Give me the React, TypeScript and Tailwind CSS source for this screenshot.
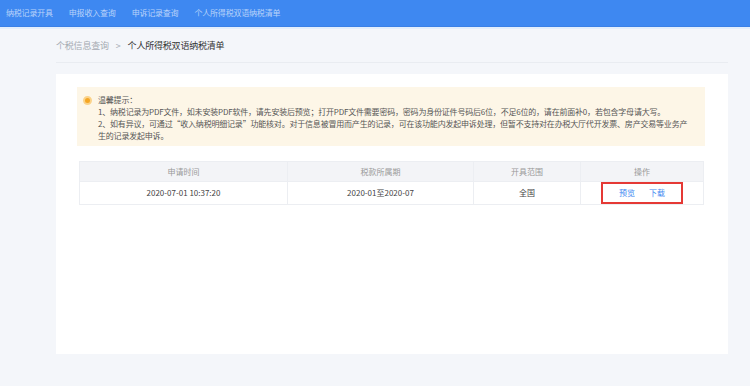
import React from 'react';

const navItems = ['纳税记录开具', '申报收入查询', '申诉记录查询', '个人所得税双语纳税清单'];

const font = { fontFamily: '"Noto Sans CJK SC", "Noto Sans", sans-serif' };

export default function App() {
  return (
    <div className="w-[750px] h-[386px] bg-[#f4f6fa] overflow-hidden text-[#333]" style={font}>
      {/* top nav */}
      <div className="h-[27px] bg-[#3e88f1] border-b border-[#3a80e6] flex items-center pl-[6px] gap-[16px]">
        {navItems.map((n) => (
          <span key={n} className="text-[8px] text-[#b9d3fa] leading-none tracking-[-0.2px]">
            {n}
          </span>
        ))}
      </div>
      <div className="h-[2px] bg-[#e3eefc]" />

      <div className="ml-[56px] w-[672px]">
        {/* breadcrumb */}
        <div className="h-[34px] flex items-center border-b border-[#e9ecf1] text-[9px] tracking-[-0.2px]">
          <span className="text-[#a6abb3]">个税信息查询</span>
          <span className="text-[#a6abb3] mx-[7px]">&gt;</span>
          <span className="text-[#333]">个人所得税双语纳税清单</span>
        </div>

        {/* card */}
        <div className="mt-[11px] h-[280px] bg-white pt-[13px] pl-[21px]">
          <div className="w-[628px] h-[59px] bg-[#fdf6e7] pl-[6px] pr-[8px] pt-[7px] flex gap-[6px]">
            <div className="w-[9px] h-[9px] mt-[2px] rounded-full bg-[#f5a623] border-2 border-[#fbd38a] shrink-0" />
            <div className="text-[8px] leading-[12px] text-[#555] whitespace-nowrap tracking-[-0.2px]">
              <div>温馨提示：</div>
              <div>
                1、纳税记录为PDF文件，如未安装PDF软件，请先安装后预览；打开PDF文件需要密码，密码为身份证件号码后6位，不足6位的，请在前面补0，若包含字母请大写。
              </div>
              <div>
                2、如有异议，可通过“收入纳税明细记录”功能核对。对于信息被冒用而产生的记录，可在该功能内发起申诉处理，但暂不支持对在办税大厅代开发票、房产交易等业务产
              </div>
              <div>生的记录发起申诉。</div>
            </div>
          </div>

          <table className="mt-[15px] ml-[2px] w-[625px] border-collapse text-[8px]">
            <thead>
              <tr className="bg-[#f3f4f7] h-[20px] text-[#999]">
                <th className="w-[208px] font-normal border border-[#eceef2]">申请时间</th>
                <th className="w-[186px] font-normal border border-[#eceef2]">税款所属期</th>
                <th className="w-[107px] font-normal border border-[#eceef2]">开具范围</th>
                <th className="font-normal border border-[#eceef2]">操作</th>
              </tr>
            </thead>
            <tbody>
              <tr className="h-[21px] text-[#444] text-center">
                <td className="border border-[#eceef2]">2020-07-01 10:37:20</td>
                <td className="border border-[#eceef2]">2020-01至2020-07</td>
                <td className="border border-[#eceef2]">全国</td>
                <td className="border border-[#eceef2] p-0">
                  <div className="flex justify-center">
                    <span className="w-[82px] h-[22px] border-2 border-[#e53935] flex items-center justify-center gap-[14px] text-[#3e88f1]">
                      <span>预览</span>
                      <span>下载</span>
                    </span>
                  </div>
                </td>
              </tr>
            </tbody>
          </table>
        </div>
      </div>
    </div>
  );
}
